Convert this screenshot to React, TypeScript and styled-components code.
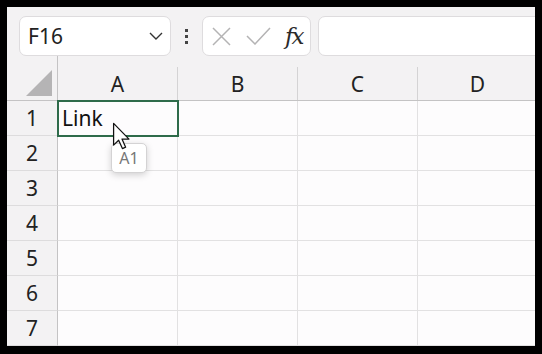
import React from "react";
import styled, { createGlobalStyle } from "styled-components";

const GlobalStyle = createGlobalStyle`
  html, body {
    margin: 0;
    padding: 0;
    background: #000;
    font-family: "Noto Sans", "Open Sans", sans-serif;
  }
`;

const Frame = styled.div`
  width: 542px;
  height: 354px;
  box-sizing: border-box;
  padding: 7px 7px 8px 7px;
  background: #000;
`;

const Window = styled.div`
  position: relative;
  width: 528px;
  height: 339px;
  overflow: hidden;
  background: #fdfcfd;
  display: flex;
  flex-direction: column;
`;

const Toolbar = styled.div`
  height: 49px;
  box-sizing: border-box;
  padding: 9px 0 0 12px;
  background: #f3f2f3;
  display: flex;
  align-items: flex-start;
  flex-shrink: 0;
`;

const Box = styled.div<{ $width?: number }>`
  height: 40px;
  box-sizing: border-box;
  background: #fff;
  border: 1px solid #dedcde;
  border-radius: 7px;
  display: flex;
  align-items: center;
  flex-shrink: 0;
  width: ${(p) => (p.$width ? `${p.$width}px` : "auto")};
`;

const NameBox = styled(Box)`
  padding: 0 7px 0 8px;
  justify-content: space-between;
  font-size: 21px;
  color: #222;
`;

const Dots = styled.div`
  width: 31px;
  height: 40px;
  display: flex;
  flex-direction: column;
  align-items: center;
  justify-content: center;
  gap: 3px;
  flex-shrink: 0;

  span {
    width: 3px;
    height: 3px;
    background: #444;
  }
`;

const ButtonsBox = styled(Box)`
  padding: 0 7px 0 9px;
  gap: 15px;
`;

const Fx = styled.span`
  font-family: "DejaVu Serif", "Liberation Serif", serif;
  font-style: italic;
  font-size: 23px;
  color: #2a2a2a;
  margin-left: -1px;
  letter-spacing: -2px;
`;

const FormulaInput = styled(Box)`
  margin-left: 7px;
  width: 260px;
`;

const Sheet = styled.div`
  display: grid;
  grid-template-columns: 51px repeat(4, 120px);
  grid-template-rows: 45px;
  grid-auto-rows: 35px;
  background: #fdfcfd;
`;

const HeaderRow = styled.div`
  display: contents;
`;

const Corner = styled.div`
  position: relative;
  background: #f3f2f3;
  box-sizing: border-box;
  border-bottom: 1px solid #c4c3c4;
  border-right: 1px solid #c4c3c4;
`;

const CornerTriangle = styled.div`
  position: absolute;
  right: 5px;
  bottom: 4px;
  width: 26px;
  height: 26px;
  background: #b5b4b5;
  clip-path: polygon(100% 0, 100% 100%, 0 100%);
`;

const ColHeader = styled.div`
  box-sizing: border-box;
  background: #f3f2f3;
  border-bottom: 1px solid #c4c3c4;
  padding-top: 11px;
  display: flex;

  div {
    flex: 1;
    border-right: 1px solid #d4d3d4;
    display: flex;
    align-items: center;
    justify-content: center;
    font-size: 21px;
    color: #222;
  }
`;

const RowHeader = styled.div`
  background: #f3f2f3;
  box-sizing: border-box;
  border-right: 1px solid #c4c3c4;
  border-bottom: 1px solid #dddcdd;
  display: flex;
  align-items: center;
  justify-content: center;
  font-size: 21px;
  color: #222;
`;

const Cell = styled.div<{ $selected?: boolean }>`
  box-sizing: border-box;
  border-right: 1px solid #e2e1e2;
  border-bottom: 1px solid #e2e1e2;
  font-size: 21px;
  color: #111;
  padding-left: 4px;
  display: flex;
  align-items: center;
  ${(p) =>
    p.$selected &&
    `
    outline: 2px solid #2e6b4a;
    outline-offset: -1px;
    position: relative;
    z-index: 1;
  `}
`;

const Pointer = styled.svg`
  position: absolute;
  left: 105px;
  top: 115px;
  z-index: 3;
`;

const Tooltip = styled.div`
  position: absolute;
  left: 104px;
  top: 136px;
  width: 36px;
  height: 30px;
  box-sizing: border-box;
  background: #fff;
  border: 1px solid #d4d3d4;
  border-radius: 5px;
  box-shadow: 0 2px 7px rgba(0, 0, 0, 0.18);
  font-size: 16px;
  color: #777;
  display: flex;
  align-items: center;
  justify-content: center;
  z-index: 2;
`;

const columns = ["A", "B", "C", "D"];
const rows = [1, 2, 3, 4, 5, 6, 7];

export default function App() {
  return (
    <>
      <GlobalStyle />
      <Frame>
        <Window>
          <Toolbar>
            <NameBox $width={152}>
              <span>F16</span>
              <svg width="14" height="8" viewBox="0 0 14 8">
                <path d="M1 1 L7 7 L13 1" fill="none" stroke="#333" strokeWidth="1.4" />
              </svg>
            </NameBox>
            <Dots>
              <span />
              <span />
              <span />
            </Dots>
            <ButtonsBox $width={109}>
              <svg width="19" height="19" viewBox="0 0 19 19">
                <path d="M1 1 L18 18 M18 1 L1 18" stroke="#b4b3b4" strokeWidth="1.5" />
              </svg>
              <svg width="25" height="18" viewBox="0 0 25 18">
                <path d="M1 9 L9 17 L24 1" fill="none" stroke="#b4b3b4" strokeWidth="1.5" />
              </svg>
              <Fx>fx</Fx>
            </ButtonsBox>
            <FormulaInput />
          </Toolbar>
          <Sheet>
            <HeaderRow>
              <Corner>
                <CornerTriangle />
              </Corner>
              {columns.map((c) => (
                <ColHeader key={c}>
                  <div>{c}</div>
                </ColHeader>
              ))}
            </HeaderRow>
            {rows.map((r) => (
              <React.Fragment key={r}>
                <RowHeader>{r}</RowHeader>
                {columns.map((c) => (
                  <Cell key={c} $selected={r === 1 && c === "A"}>
                    {r === 1 && c === "A" ? "Link" : ""}
                  </Cell>
                ))}
              </React.Fragment>
            ))}
          </Sheet>
          <Tooltip>A1</Tooltip>
          <Pointer width="20" height="28" viewBox="0 0 14 20">
            <path
              d="M1 1 V16.5 L4.6 13 L7.3 19 L9.6 18 L7 12.2 H12 Z"
              fill="#fff"
              stroke="#111"
              strokeWidth="0.9"
              strokeLinejoin="round"
            />
          </Pointer>
        </Window>
      </Frame>
    </>
  );
}
